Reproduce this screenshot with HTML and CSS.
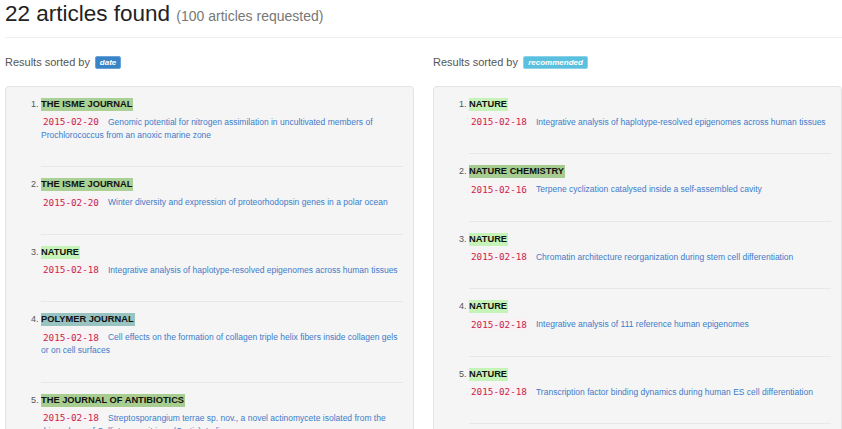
FILE: index.html
```html
<!DOCTYPE html>
<html>
<head>
<meta charset="utf-8">
<link rel="stylesheet" href="styles.css">
</head>
<body>
<div class="page">
  <h1 class="title">22 articles found <small>(100 articles requested)</small></h1>
  <div class="cols">
    <section class="col">
      <p class="sorted">Results sorted by <span class="badge badge-date">date</span></p>
      <div class="well">
        <ol class="results">
          <li class="item">
            <span class="journal j-isme">THE ISME JOURNAL</span>
            <p class="meta"><code class="date">2015-02-20</code><a class="link" href="#">Genomic potential for nitrogen assimilation in uncultivated members of Prochlorococcus from an anoxic marine zone</a></p>
          </li>
          <li class="item">
            <span class="journal j-isme">THE ISME JOURNAL</span>
            <p class="meta"><code class="date">2015-02-20</code><a class="link" href="#">Winter diversity and expression of proteorhodopsin genes in a polar ocean</a></p>
          </li>
          <li class="item">
            <span class="journal j-nature">NATURE</span>
            <p class="meta"><code class="date">2015-02-18</code><a class="link" href="#">Integrative analysis of haplotype-resolved epigenomes across human tissues</a></p>
          </li>
          <li class="item">
            <span class="journal j-polymer">POLYMER JOURNAL</span>
            <p class="meta"><code class="date">2015-02-18</code><a class="link" href="#">Cell effects on the formation of collagen triple helix fibers inside collagen gels or on cell surfaces</a></p>
          </li>
          <li class="item">
            <span class="journal j-antibiotics">THE JOURNAL OF ANTIBIOTICS</span>
            <p class="meta"><code class="date">2015-02-18</code><a class="link" href="#">Streptosporangium terrae sp. nov., a novel actinomycete isolated from the rhizosphere of Callistemon citrinus (Curtis), India</a></p>
          </li>
        </ol>
      </div>
    </section>
    <section class="col">
      <p class="sorted">Results sorted by <span class="badge badge-rec">recommended</span></p>
      <div class="well">
        <ol class="results">
          <li class="item">
            <span class="journal j-nature">NATURE</span>
            <p class="meta"><code class="date">2015-02-18</code><a class="link" href="#">Integrative analysis of haplotype-resolved epigenomes across human tissues</a></p>
          </li>
          <li class="item">
            <span class="journal j-chem">NATURE CHEMISTRY</span>
            <p class="meta"><code class="date">2015-02-16</code><a class="link" href="#">Terpene cyclization catalysed inside a self-assembled cavity</a></p>
          </li>
          <li class="item">
            <span class="journal j-nature">NATURE</span>
            <p class="meta"><code class="date">2015-02-18</code><a class="link" href="#">Chromatin architecture reorganization during stem cell differentiation</a></p>
          </li>
          <li class="item">
            <span class="journal j-nature">NATURE</span>
            <p class="meta"><code class="date">2015-02-18</code><a class="link" href="#">Integrative analysis of 111 reference human epigenomes</a></p>
          </li>
          <li class="item">
            <span class="journal j-nature">NATURE</span>
            <p class="meta"><code class="date">2015-02-18</code><a class="link" href="#">Transcription factor binding dynamics during human ES cell differentiation</a></p>
          </li>
        </ol>
      </div>
    </section>
  </div>
</div>
</body>
</html>
```

FILE: styles.css
```css
html, body {
  margin: 0;
  padding: 0;
  background: #fff;
  overflow: hidden;
}
body {
  font-family: "Liberation Sans", Arial, Helvetica, sans-serif;
  color: #333;
}
.page {
  padding-left: 5px;
}
.title {
  margin: 1px 0 0 0;
  font-size: 22.5px;
  line-height: 26px;
  font-weight: 400;
  color: #222;
  padding-bottom: 8px;
  border-bottom: 1px solid #eee;
}
.title small {
  font-size: 14px;
  color: #777;
}
.cols {
  display: grid;
  grid-template-columns: 409px 409px;
  column-gap: 19px;
}
.sorted {
  margin: 14px 0 14px 0;
  font-size: 11px;
  line-height: 20px;
  color: #555;
}
.badge {
  display: inline-block;
  vertical-align: 1px;
  margin-left: 2px;
  height: 13px;
  line-height: 12px;
  box-sizing: border-box;
  font-size: 8px;
  font-weight: bold;
  font-style: italic;
  color: #fff;
  border-radius: 2px;
  text-align: center;
  padding: 0;
}
.badge-date {
  background: #3a84c6;
  border: 1px solid #6aa3d8;
  width: 26px;
}
.badge-rec {
  background: #5bc0de;
  border: 1px solid #8ad3ea;
  width: 65px;
}
.well {
  background: #f5f5f5;
  border: 1px solid #e3e3e3;
  border-radius: 4px;
  padding: 10.5px 10px 0 10px;
  height: 400px;
}
.results {
  margin: 0;
  padding-left: 25px;
  font-size: 9px;
  color: #555;
}
.item {
  padding: 11px 0 24.5px 0;
  border-bottom: 1px solid #e8e8e8;
}
.item:first-child {
  padding-top: 0;
}
.journal {
  display: inline-block;
  font-size: 9.3px;
  line-height: 13px;
  font-weight: bold;
  color: #111;
  padding: 0 1px 0 0;
}
.j-isme { background: #a9d095; }
.j-nature { background: #c6f4b8; }
.j-polymer { background: #98c3c1; }
.j-antibiotics { background: #a8cd90; }
.j-chem { background: #a6cc91; }
.meta {
  margin: 4px 0 0 0;
  line-height: 13px;
}
.date {
  font-family: "DejaVu Sans Mono", "Liberation Mono", monospace;
  font-size: 9.3px;
  color: #c7254e;
  background: #f9f2f4;
  padding: 0.5px 2px;
  margin-right: 7px;
  border-radius: 2px;
}
.link {
  color: #3d7cc9;
  text-decoration: none;
  font-size: 8.5px;
}
```
